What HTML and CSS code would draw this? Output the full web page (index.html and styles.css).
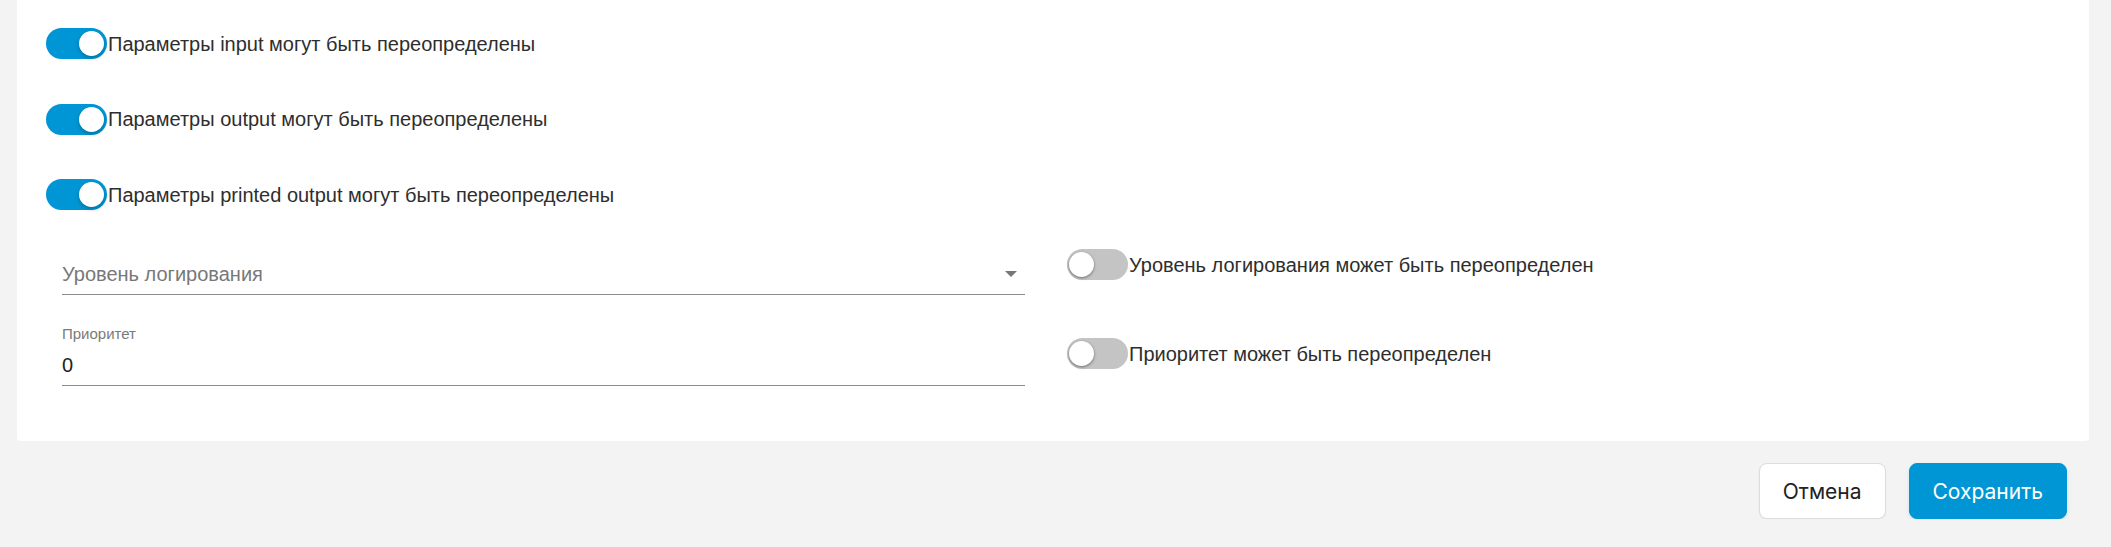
FILE: index.html
```html
<!DOCTYPE html>
<html lang="ru">
  <head>
    <meta charset="UTF-8" />
    <title>Параметры</title>
    <link rel="stylesheet" href="styles.css">
  </head>
  <body>
    <div class="page">
      <div class="panel">
        <div class="switch-list">
          <label class="switch-row">
            <span class="switch on"><span class="knob"></span></span>
            <span class="switch-text">Параметры input могут быть переопределены</span>
          </label>
          <label class="switch-row">
            <span class="switch on"><span class="knob"></span></span>
            <span class="switch-text">Параметры output могут быть переопределены</span>
          </label>
          <label class="switch-row">
            <span class="switch on"><span class="knob"></span></span>
            <span class="switch-text">Параметры printed output могут быть переопределены</span>
          </label>
        </div>

        <div class="fields">
          <div class="field select-field">
            <span class="placeholder">Уровень логирования</span>
            <span class="arrow"></span>
          </div>
          <label class="switch-row side first">
            <span class="switch"><span class="knob"></span></span>
            <span class="switch-text">Уровень логирования может быть переопределен</span>
          </label>

          <div class="field text-field">
            <span class="field-label">Приоритет</span>
            <span class="value">0</span>
          </div>
          <label class="switch-row side second">
            <span class="switch"><span class="knob"></span></span>
            <span class="switch-text">Приоритет может быть переопределен</span>
          </label>
        </div>
      </div>

      <div class="actions">
        <button class="btn cancel">Отмена</button>
        <button class="btn save">Сохранить</button>
      </div>
    </div>
  </body>
</html>
```

FILE: styles.css
```css
body {
  margin: 0;
  background-color: #f3f3f3;
  font-family: "Liberation Sans", Arial, sans-serif;
  color: #2e2e2e;
}
.page {
  padding: 0 22px 0 17px;
}
.panel {
  background-color: #fff;
  border-radius: 0 0 4px 4px;
  padding: 28px 29px 55px 29px;
}

.switch-list {
  display: flex;
  flex-direction: column;
  gap: 44.5px;
}
.switch-row {
  display: flex;
  align-items: center;
  height: 31px;
}
.switch {
  position: relative;
  flex: none;
  width: 61px;
  height: 31px;
  border-radius: 16px;
  background-color: #c4c4c4;
}
.switch.on {
  background-color: #0096d6;
}
.knob {
  position: absolute;
  top: 3px;
  left: 2px;
  width: 25px;
  height: 25px;
  border-radius: 50%;
  background-color: #fff;
  box-shadow: 0 1px 3px rgba(0, 0, 0, 0.45);
}
.switch.on .knob {
  left: auto;
  right: 3px;
  box-shadow: 0 2px 4px rgba(0, 0, 0, 0.25);
}
.switch-text {
  font-size: 20px;
  line-height: 24px;
  margin-left: 1px;
  white-space: nowrap;
}

.fields {
  display: grid;
  grid-template-columns: 963px auto;
  column-gap: 42px;
  row-gap: 24px;
  margin-top: 30px;
  padding-left: 16px;
}
.field {
  border-bottom: 1px solid #8c8c8c;
  box-sizing: border-box;
}
.select-field {
  height: 55px;
  display: flex;
  align-items: flex-end;
  justify-content: space-between;
  padding: 0 8px 8px 0;
}
.placeholder {
  font-size: 20px;
  line-height: 23px;
  color: #787878;
}
.arrow {
  width: 0;
  height: 0;
  border-left: 6px solid transparent;
  border-right: 6px solid transparent;
  border-top: 6px solid #777;
  margin-bottom: 9px;
}
.text-field {
  height: 67px;
  display: flex;
  flex-direction: column;
  justify-content: flex-end;
  padding-bottom: 8px;
}
.field-label {
  font-size: 15px;
  line-height: 17px;
  color: #7a7a7a;
  margin-bottom: 12px;
}
.value {
  font-size: 20px;
  line-height: 23px;
  color: #222;
}
.switch-row.side.first {
  margin-top: 9px;
}
.switch-row.side.second {
  margin-top: 19px;
}

.actions {
  display: flex;
  justify-content: flex-end;
  gap: 23px;
  padding: 22px 22px 0 0;
}
.btn {
  height: 56px;
  padding: 0 23px;
  border-radius: 8px;
  font-family: Inter, "Liberation Sans", sans-serif;
  font-size: 21px;
  cursor: pointer;
}
.cancel {
  background-color: #fff;
  color: #222;
  border: 1px solid #dcdcdc;
  box-shadow: 0 1px 2px rgba(0, 0, 0, 0.06);
}
.save {
  background-color: #0096d6;
  color: #fff;
  border: 1px solid #0096d6;
  box-shadow: 0 2px 4px rgba(0, 150, 214, 0.15);
}
```
